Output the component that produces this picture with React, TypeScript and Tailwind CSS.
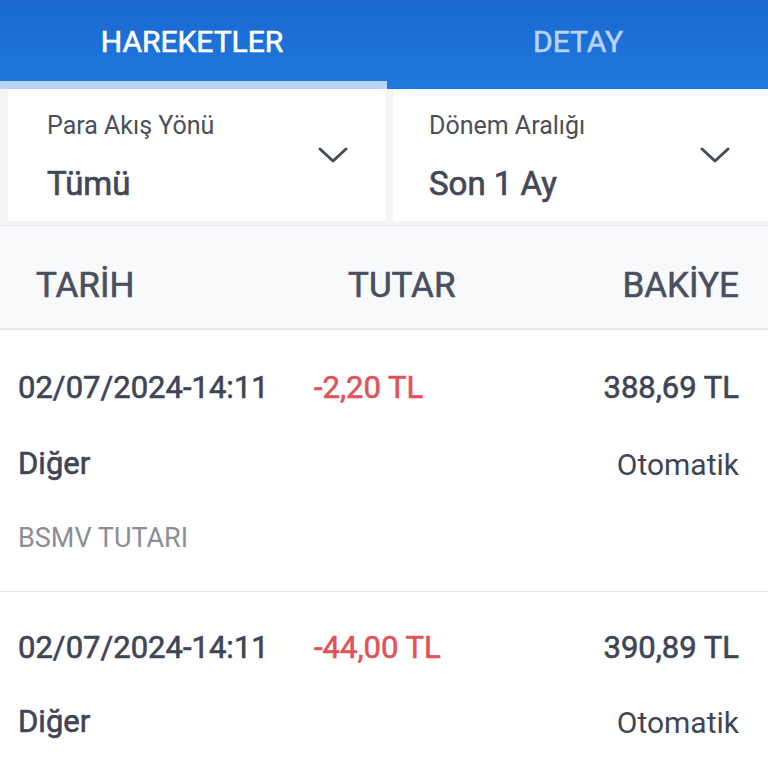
import React from "react";

const Chevron = () => (
  <svg width="30" height="18" viewBox="0 0 30 18" fill="none">
    <path d="M2 3 L15 15 L28 3" stroke="#474c59" strokeWidth="3" strokeLinecap="round" strokeLinejoin="round" />
  </svg>
);

const Filter = ({ label, value, pl }: { label: string; value: string; pl: string }) => (
  <div className={`flex-1 bg-white flex items-center justify-between ${pl} pr-[38px] h-[132px]`}>
    <div className="flex flex-col pt-[4px]">
      <div className="text-[25px] leading-[30px] text-[#4b4f59]">{label}</div>
      <div className="text-[33px] leading-[40px] text-[#434857] [-webkit-text-stroke:0.7px_#434857] mt-[23px]">{value}</div>
    </div>
    <Chevron />
  </div>
);

const med = "[-webkit-text-stroke:0.6px_currentColor]";

const Row = ({ amount, balance, note, first }: { amount: string; balance: string; note?: string; first?: boolean }) => (
  <div className={`pl-[18px] pr-[29px] ${first ? "pt-[38px]" : "pt-[36px]"} ${note ? "pb-[33px]" : "pb-[20px]"} ${first ? "border-b border-[#e6e7ea]" : ""}`}>
    <div className="flex items-center h-[40px]">
      <div className={`w-[296px] text-[31px] text-[#404555] ${med}`}>02/07/2024-14:11</div>
      <div className={`text-[31px] text-[#df5459] ${med}`}>{amount}</div>
      <div className={`flex-1 text-right text-[31px] text-[#404555] ${med}`}>{balance}</div>
    </div>
    <div className={`flex items-center justify-between h-[40px] ${first ? "mt-[36px]" : "mt-[34px]"}`}>
      <div className={`text-[31px] text-[#404555] ${med}`}>Diğer</div>
      <div className="text-[30px] text-[#404555]">Otomatik</div>
    </div>
    {note && (
      <div className="flex items-center h-[40px] mt-[34px]">
        <div className="text-[27px] text-[#8b8e95]">{note}</div>
      </div>
    )}
  </div>
);

export default function App() {
  return (
    <div className="w-[768px] h-[768px] overflow-hidden bg-white" style={{ fontFamily: "Roboto, 'Noto Sans', sans-serif" }}>
      <div className="bg-gradient-to-b from-[#1a68d2] to-[#1f79df]">
        <div className="flex h-[81px]">
          <div className={`flex-1 flex items-center justify-center text-[30px] text-white ${med} pt-[1px] pl-[2px]`}>HAREKETLER</div>
          <div className={`flex-1 flex items-center justify-center text-[30px] text-[#b9d4f6] ${med} pt-[1px] pl-[6px]`}>DETAY</div>
        </div>
        <div className="h-[8px] w-[387px] bg-[#b8d3f5]" />
      </div>
      <div className="flex gap-[7px] pl-[8px] bg-[#f4f5f7] pb-[4px] border-b border-[#e7e8eb]">
        <Filter label="Para Akış Yönü" value="Tümü" pl="pl-[39px]" />
        <Filter label="Dönem Aralığı" value="Son 1 Ay" pl="pl-[36px]" />
      </div>
      <div className={`flex items-center h-[104px] bg-[#f8f9fb] border-b-2 border-[#e8e9ec] pl-[36px] pr-[29px] pt-[18px] text-[35px] text-[#4a4f5f] ${med}`}>
        <div className="w-[312px]">TARİH</div>
        <div>TUTAR</div>
        <div className="flex-1 text-right">BAKİYE</div>
      </div>
      <Row amount="-2,20 TL" balance="388,69 TL" note="BSMV TUTARI" first />
      <Row amount="-44,00 TL" balance="390,89 TL" />
    </div>
  );
}
